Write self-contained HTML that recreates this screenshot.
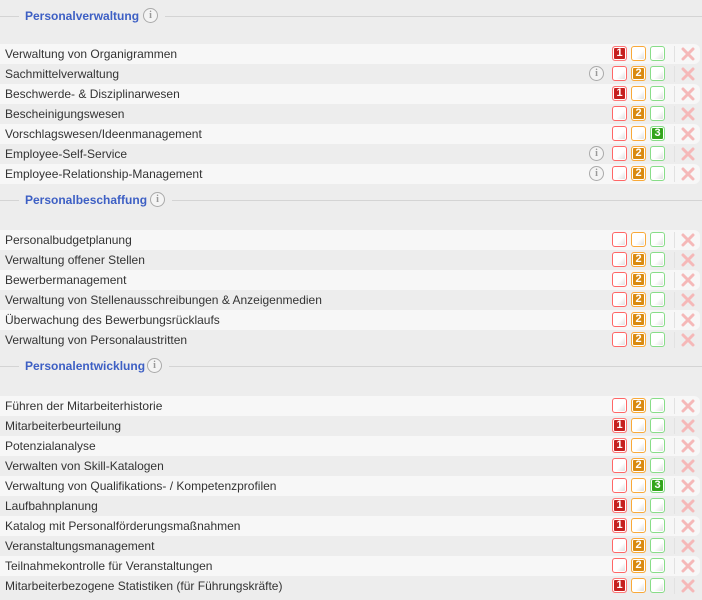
<!DOCTYPE html>
<html><head><meta charset="utf-8"><style>
body{margin:0;width:702px;height:600px;background:#ededed;font-family:"Liberation Sans",sans-serif;font-size:12px;color:#333;position:relative;overflow:hidden}
.h{position:absolute;left:0;width:702px;height:20px}
.h .l{position:absolute;top:10px;height:1px;background:#d4d4d4}
.h span{position:absolute;left:25px;top:3px;color:#3d5fc4;font-weight:bold;font-size:12px}
.r{position:absolute;left:0;width:700px;height:20px;border-radius:0 6px 6px 0}
.r.o{background:#f7f7f7}
.r .t{position:absolute;left:5px;top:3px}
.b{position:absolute;top:2px;width:13px;height:13px;border-radius:3px;border:1px solid;background:linear-gradient(135deg,#fff 55%,#d8d8d8);box-shadow:inset 0 0 0 1px #fff;color:#fff;font-weight:bold;font-size:11px;line-height:13px;text-align:center}
.b1{left:612px;border-color:#f66}.b2{left:631px;border-color:#f9a938}.b3{left:650px;border-color:#8d8}
.b1.f{background:#c6201f;border-color:#f77}.b2.f{background:#d98a10;border-color:#f9a938}.b3.f{background:#33a51b;border-color:#8d8}
.sep{position:absolute;left:674px;top:2px;width:1px;height:16px;background:#e2e2e2}
.x{position:absolute;left:681px;top:3px}
.i{position:absolute;width:13px;height:13px;border:1px solid #aaa;border-radius:50%;color:#999;font-size:10px;line-height:13px;text-align:center;font-family:"Liberation Serif",serif;font-weight:bold;background:#f4f4f4}
</style></head><body>
<script>
const S=[
[6,"Personalverwaltung",143,44,[["Verwaltung von Organigrammen",1,0],["Sachmittelverwaltung",2,1],["Beschwerde- & Disziplinarwesen",1,0],["Bescheinigungswesen",2,0],["Vorschlagswesen/Ideenmanagement",3,0],["Employee-Self-Service",2,1],["Employee-Relationship-Management",2,1]]],
[190,"Personalbeschaffung",150,230,[["Personalbudgetplanung",0,0],["Verwaltung offener Stellen",2,0],["Bewerbermanagement",2,0],["Verwaltung von Stellenausschreibungen & Anzeigenmedien",2,0],["Überwachung des Bewerbungsrücklaufs",2,0],["Verwaltung von Personalaustritten",2,0]]],
[356,"Personalentwicklung",147,396,[["Führen der Mitarbeiterhistorie",2,0],["Mitarbeiterbeurteilung",1,0],["Potenzialanalyse",1,0],["Verwalten von Skill-Katalogen",2,0],["Verwaltung von Qualifikations- / Kompetenzprofilen",3,0],["Laufbahnplanung",1,0],["Katalog mit Personalförderungsmaßnahmen",1,0],["Veranstaltungsmanagement",2,0],["Teilnahmekontrolle für Veranstaltungen",2,0],["Mitarbeiterbezogene Statistiken (für Führungskräfte)",1,0]]]];
let h="";
const X='<svg class="x" width="14" height="14"><path d="M2 2L12 12M12 2L2 12" stroke="#f5b8b8" stroke-width="3" stroke-linecap="round"/></svg>';
for(const [hy,name,ix,ry,rows] of S){
h+=`<div class="h" style="top:${hy}px"><div class="l" style="left:0;width:19px"></div><span>${name}</span><div class="i" style="left:${ix}px;top:2px">i</div><div class="l" style="left:${ix+22}px;right:0"></div></div>`;
rows.forEach((r,k)=>{
let bx="";for(let n=1;n<=3;n++)bx+=`<div class="b b${n}${r[1]==n?' f':''}">${r[1]==n?n:''}</div>`;
h+=`<div class="r${k%2==0?' o':''}" style="top:${ry+k*20}px"><div class="t">${r[0]}</div>${r[2]?'<div class="i" style="left:589px;top:2px">i</div>':''}${bx}<div class="sep"></div>${X}</div>`;});
}
document.write(h);
</script>
</body></html>
